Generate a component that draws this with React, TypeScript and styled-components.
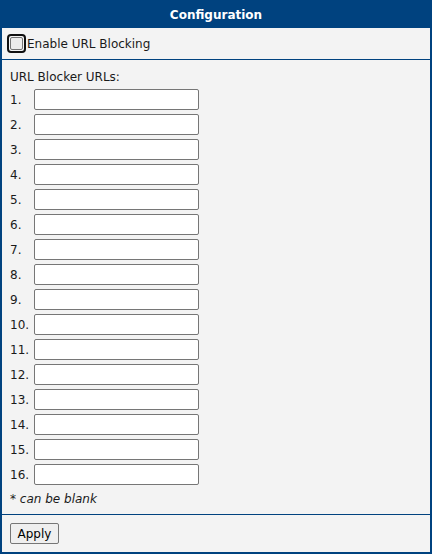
import styled, { createGlobalStyle } from "styled-components";

const GlobalStyle = createGlobalStyle`
  html, body {
    margin: 0;
    padding: 0;
    background: #ffffff;
  }
  body {
    font-family: "DejaVu Sans", Verdana, sans-serif;
    font-size: 12px;
    color: #1a1a1a;
  }
`;

const Panel = styled.div`
  width: 432px;
  height: 554px;
  box-sizing: border-box;
  background: #f3f3f3;
  border: 2px solid #00427f;
  border-top: none;
  display: flex;
  flex-direction: column;
`;

const Header = styled.div`
  height: 28px;
  margin: 0 -2px;
  background: #00427f;
  color: #ffffff;
  font-weight: bold;
  font-size: 12px;
  display: flex;
  align-items: center;
  justify-content: center;
  padding-top: 1px;
  box-sizing: border-box;
`;

const Section = styled.div<{ $grow?: boolean }>`
  display: flex;
  flex-direction: column;
  border-bottom: 1px solid #00427f;
  flex: ${(p) => (p.$grow ? 1 : "none")};
`;

const CheckRow = styled.label`
  height: 31px;
  display: flex;
  align-items: center;
  padding-left: 5px;
  gap: 1px;
`;

const CheckBox = styled.span`
  width: 19px;
  height: 19px;
  box-sizing: border-box;
  border: 2px solid #101010;
  border-radius: 4px;
  display: flex;
  align-items: center;
  justify-content: center;
  &::after {
    content: "";
    width: 13px;
    height: 13px;
    box-sizing: border-box;
    border: 1px solid #767676;
    border-radius: 2px;
    background: #ececec;
  }
`;

const Body = styled.div`
  padding: 9px 0 0 8px;
  display: flex;
  flex-direction: column;
`;

const Caption = styled.div`
  height: 20px;
  line-height: 17px;
`;

const UrlList = styled.div`
  display: flex;
  flex-direction: column;
  gap: 4px;
`;

const UrlRow = styled.div`
  display: flex;
  align-items: center;
  height: 21px;
`;

const Num = styled.span`
  width: 24px;
`;

const UrlInput = styled.input`
  width: 165px;
  height: 21px;
  box-sizing: border-box;
  border: 1px solid #767676;
  border-radius: 2px;
  background: #ffffff;
  margin: 0;
  padding: 1px 2px;
  font: inherit;
`;

const Note = styled.div`
  margin-top: 7px;
  line-height: 15px;
  em {
    font-style: italic;
  }
`;

const Footer = styled.div`
  height: 37px;
  box-sizing: border-box;
  padding: 8px 0 0 8px;
`;

const Button = styled.button`
  width: 49px;
  height: 21px;
  padding: 0;
  font: inherit;
  color: #000;
  background: #efefef;
  border: 1px solid #767676;
  border-radius: 2px;
`;

export default function App() {
  const rows = Array.from({ length: 16 }, (_, i) => i + 1);
  return (
    <>
      <GlobalStyle />
      <Panel>
        <Header>Configuration</Header>
        <Section>
          <CheckRow>
            <CheckBox />
            Enable URL Blocking
          </CheckRow>
        </Section>
        <Section $grow>
          <Body>
            <Caption>URL Blocker URLs:</Caption>
            <UrlList>
              {rows.map((n) => (
                <UrlRow key={n}>
                  <Num>{n}.</Num>
                  <UrlInput type="text" />
                </UrlRow>
              ))}
            </UrlList>
            <Note>
              * <em>can be blank</em>
            </Note>
          </Body>
        </Section>
        <Footer>
          <Button>Apply</Button>
        </Footer>
      </Panel>
    </>
  );
}
